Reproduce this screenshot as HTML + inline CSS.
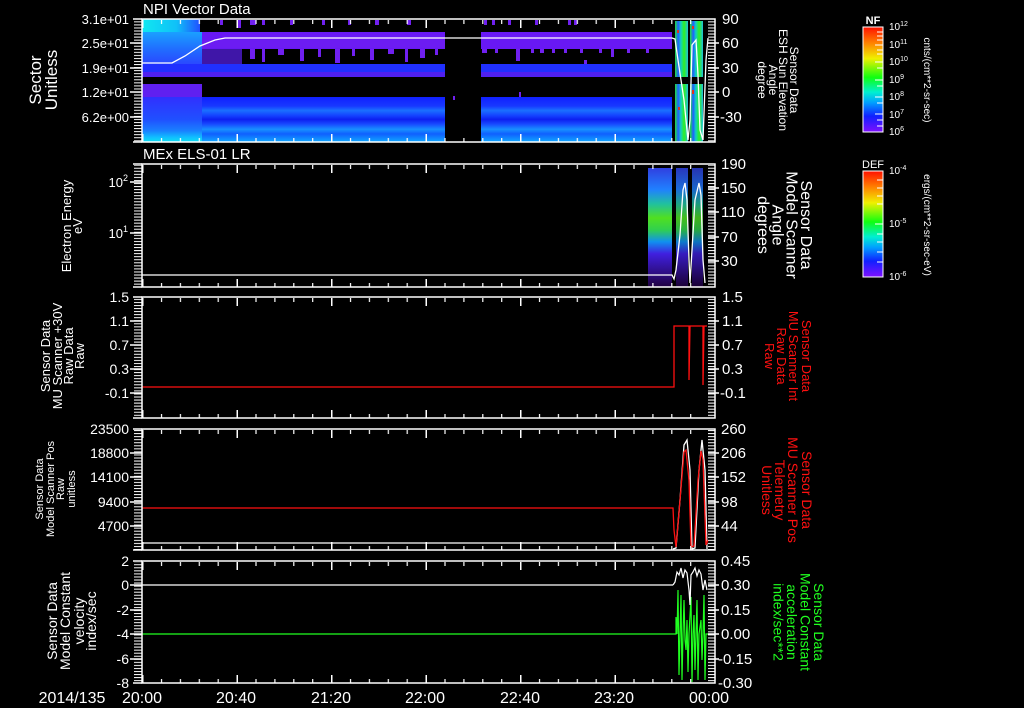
<!DOCTYPE html>
<html><head><meta charset="utf-8"><style>
html,body{margin:0;padding:0;background:#000;}
svg{display:block}
text{font-family:"Liberation Sans",sans-serif;fill:#fff}
</style></head><body>
<svg width="1024" height="708" viewBox="0 0 1024 708" xmlns="http://www.w3.org/2000/svg">
<defs>
<pattern id="tt" x="142" y="0" width="18.9" height="4" patternUnits="userSpaceOnUse"><rect x="0" y="0" width="1.2" height="4" fill="#fff"/></pattern>
<pattern id="tm" x="142" y="0" width="94.5" height="9" patternUnits="userSpaceOnUse"><rect x="0" y="0" width="1.5" height="9" fill="#fff"/></pattern>
<pattern id="yl" x="0" y="0" width="10" height="3.05" patternUnits="userSpaceOnUse"><rect x="0" y="0" width="10" height="1" fill="#fff"/></pattern>
<linearGradient id="rb" x1="0" y1="0" x2="0" y2="1">
<stop offset="0" stop-color="#ff1000"/><stop offset="0.15" stop-color="#ff8000"/><stop offset="0.3" stop-color="#f0f000"/><stop offset="0.48" stop-color="#10ff10"/><stop offset="0.62" stop-color="#00f0d0"/><stop offset="0.72" stop-color="#00a0ff"/><stop offset="0.85" stop-color="#1020ff"/><stop offset="1" stop-color="#8010ff"/></linearGradient>
<linearGradient id="lowb" x1="0" y1="0" x2="0" y2="1">
<stop offset="0" stop-color="#1020ff"/><stop offset="0.2" stop-color="#1838ff"/><stop offset="0.3" stop-color="#1a70ff"/><stop offset="0.42" stop-color="#1440ff"/><stop offset="0.5" stop-color="#0c20f0"/><stop offset="0.6" stop-color="#1848ff"/><stop offset="0.72" stop-color="#1890ff"/><stop offset="0.82" stop-color="#1060ff"/><stop offset="1" stop-color="#10a8ff"/></linearGradient>
<linearGradient id="lowl" x1="0" y1="0" x2="0" y2="1">
<stop offset="0" stop-color="#3030ff"/><stop offset="0.5" stop-color="#2050ff"/><stop offset="0.75" stop-color="#1a80ff"/><stop offset="0.9" stop-color="#10c0ff"/><stop offset="1" stop-color="#10e0f0"/></linearGradient>
<linearGradient id="topl" x1="0" y1="0" x2="1" y2="0">
<stop offset="0" stop-color="#10e8f0"/><stop offset="0.6" stop-color="#10c0f8"/><stop offset="1" stop-color="#2050ff"/></linearGradient>
<linearGradient id="midl" x1="0" y1="0" x2="0" y2="1">
<stop offset="0" stop-color="#1aa0ff"/><stop offset="0.5" stop-color="#2070ff"/><stop offset="1" stop-color="#2a48ff"/></linearGradient>
<linearGradient id="strip" x1="0" y1="0" x2="1" y2="0">
<stop offset="0" stop-color="#20e040"/><stop offset="0.25" stop-color="#2060ff"/><stop offset="0.45" stop-color="#10d0c0"/><stop offset="0.7" stop-color="#30f020"/><stop offset="1" stop-color="#20c0e0"/></linearGradient>
<linearGradient id="els" x1="0" y1="0" x2="0" y2="1">
<stop offset="0" stop-color="#3040e0"/><stop offset="0.18" stop-color="#2080ff"/><stop offset="0.3" stop-color="#20c0a0"/><stop offset="0.42" stop-color="#50e020"/><stop offset="0.52" stop-color="#30d050"/><stop offset="0.62" stop-color="#1090f0"/><stop offset="0.72" stop-color="#4020e0"/><stop offset="1" stop-color="#200040"/></linearGradient>
</defs>

<!-- ===== Panel 1 spectrogram ===== -->
<g>
<rect x="142" y="19" width="58" height="13" fill="url(#topl)"/>
<rect x="142" y="32" width="60" height="32" fill="url(#midl)"/>
<rect x="202" y="32" width="243" height="17" fill="#6818f4"/>
<rect x="481" y="32" width="191" height="17" fill="#6818f4"/>
<rect x="202" y="40" width="243" height="8" fill="#7020f0" opacity="0.6"/>
<rect x="202" y="49" width="40" height="15" fill="#5a20f0" opacity="0.7"/>
<rect x="142" y="64" width="303" height="13" fill="#2030ff"/>
<rect x="481" y="64" width="191" height="13" fill="#2030ff"/>
<rect x="142" y="72" width="303" height="5" fill="#5020f0"/>
<rect x="481" y="72" width="191" height="5" fill="#5020f0"/>
<rect x="142" y="84" width="60" height="13" fill="#6020f0"/>
<rect x="142" y="97" width="303" height="45" fill="url(#lowb)"/>
<rect x="481" y="97" width="191" height="45" fill="url(#lowb)"/>
<rect x="142" y="97" width="60" height="45" fill="url(#lowl)"/>
<g fill="#7020f0">
<rect x="220" y="20" width="3" height="5"/><rect x="238" y="20" width="3" height="8"/><rect x="250" y="20" width="6" height="5"/><rect x="262" y="20" width="3" height="5"/><rect x="290" y="20" width="3" height="5"/><rect x="322" y="20" width="3" height="5"/><rect x="348" y="20" width="3" height="5"/><rect x="375" y="20" width="4" height="5"/><rect x="407" y="20" width="4" height="5"/><rect x="484" y="20" width="3" height="5"/><rect x="492" y="20" width="3" height="5"/><rect x="508" y="20" width="3" height="5"/><rect x="535" y="20" width="3" height="5"/><rect x="568" y="20" width="3" height="5"/><rect x="574" y="20" width="3" height="5"/>
<rect x="250" y="49" width="5" height="10"/><rect x="262" y="49" width="3" height="13"/><rect x="278" y="49" width="6" height="6"/><rect x="300" y="49" width="4" height="12"/><rect x="318" y="49" width="3" height="8"/><rect x="335" y="49" width="5" height="14"/><rect x="352" y="49" width="3" height="7"/><rect x="370" y="49" width="4" height="11"/><rect x="388" y="49" width="6" height="5"/><rect x="405" y="49" width="3" height="13"/><rect x="420" y="49" width="5" height="9"/><rect x="435" y="49" width="3" height="6"/>
<rect x="482" y="49" width="5" height="4"/><rect x="495" y="49" width="3" height="4"/><rect x="516" y="49" width="4" height="12"/><rect x="531" y="49" width="3" height="4"/><rect x="540" y="49" width="4" height="4"/><rect x="552" y="49" width="3" height="4"/><rect x="564" y="49" width="3" height="4"/><rect x="580" y="49" width="3" height="4"/><rect x="584" y="60" width="3" height="4"/><rect x="599" y="49" width="3" height="4"/><rect x="611" y="49" width="3" height="8"/><rect x="627" y="49" width="3" height="4"/><rect x="646" y="49" width="3" height="4"/>
<rect x="519" y="92" width="2" height="5"/><rect x="453" y="96" width="2" height="4"/>
</g>
<rect x="675" y="21" width="13" height="56" fill="url(#strip)"/>
<rect x="690" y="21" width="13" height="56" fill="url(#strip)"/>
<rect x="675" y="84" width="13" height="58" fill="url(#strip)"/>
<rect x="690" y="84" width="13" height="58" fill="url(#strip)"/>
<g fill="#e03020"><rect x="677" y="30" width="2" height="3"/><rect x="692" y="26" width="2" height="3"/><rect x="692" y="90" width="2" height="4"/><rect x="678" y="107" width="2" height="3"/></g>
<polyline points="142,63 172,63 185,56 200,46 215,40 225,38 672,38 675,39 678,60 681,80 684,100 688,140 690,120 692,45 696,40 698,75 700,130 703,140 706,60 708,38" fill="none" stroke="#fff" stroke-width="1.3"/>
</g>

<!-- ===== Panel 2 ===== -->
<rect x="648" y="168" width="24" height="119" fill="url(#els)"/>
<rect x="676" y="168" width="12" height="119" fill="url(#els)" opacity="0.85"/>
<rect x="692" y="168" width="11" height="119" fill="url(#els)" opacity="0.8"/>
<polyline points="142,275 672,275 674,279 676,270 680,235 683,190 685,183 687,200 689,260 690,283 692,250 695,200 699,183 701,195 703,260 705,283" fill="none" stroke="#fff" stroke-width="1.3"/>

<!-- ===== Panel 3 ===== -->
<polyline points="142,387 674,387 674,326 689,326 689,380 690,326 703,326 703,385 704,326 707,326" fill="none" stroke="#ff1010" stroke-width="1.3"/>

<!-- ===== Panel 4 ===== -->
<line x1="142" y1="543" x2="673" y2="543" stroke="#fff" stroke-width="1.2"/>
<polyline points="673,549 676,548 680,500 684,445 687,440 690,470 692,549 695,548 699,470 702,440 705,470 707,549" fill="none" stroke="#fff" stroke-width="1.3"/>
<polyline points="142,508 673,508 674,530 676,547 680,500 684,452 686,450 689,480 691,547 694,546 698,480 701,451 703,460 706,545 708,540" fill="none" stroke="#ff1010" stroke-width="1.3"/>

<!-- ===== Panel 5 ===== -->
<line x1="142" y1="585" x2="673" y2="585" stroke="#fff" stroke-width="1.2"/>
<line x1="142" y1="634" x2="673" y2="634" stroke="#20ff20" stroke-width="1.2"/>
<polyline points="673,634 676,634 676,617 677,634 678,590 679,675 680,634 681,595 682,680 683,634 684,600 685,640 686,650 687,620 688,672 689,634 691,597 692,682 693,634 694,615 695,670 696,634 697,600 698,680 699,634 701,620 702,660 703,634 704,595 705,680 706,634 708,634" fill="none" stroke="#20ff20" stroke-width="1.2"/>
<polyline points="673,585 675,582 677,572 679,575 681,568 683,578 685,570 687,573 689,590 690,605 691,575 693,572 695,568 697,576 699,570 701,574 703,590 705,580 707,590" fill="none" stroke="#fff" stroke-width="1.2"/>

<!-- ===== Frames & ticks ===== -->
<g fill="none" stroke="#fff" stroke-width="1.5">
<rect x="142" y="19" width="573" height="123"/>
<rect x="142" y="164" width="573" height="123"/>
<rect x="142" y="297" width="573" height="121"/>
<rect x="142" y="429" width="573" height="121"/>
<rect x="142" y="561" width="573" height="122"/>
<line x1="133" y1="19" x2="142" y2="19"/><line x1="133" y1="142" x2="142" y2="142"/>
<line x1="133" y1="164" x2="142" y2="164"/><line x1="133" y1="287" x2="142" y2="287"/>
<line x1="133" y1="297" x2="142" y2="297"/><line x1="133" y1="418" x2="142" y2="418"/>
<line x1="133" y1="429" x2="142" y2="429"/><line x1="133" y1="550" x2="142" y2="550"/>
<line x1="133" y1="561" x2="142" y2="561"/><line x1="133" y1="683" x2="142" y2="683"/>
</g>
<g fill="url(#tt)">
<rect x="142" y="20" width="567" height="4"/><rect x="142" y="138" width="567" height="4"/>
<rect x="142" y="165" width="567" height="4"/><rect x="142" y="283" width="567" height="4"/>
<rect x="142" y="298" width="567" height="4"/><rect x="142" y="414" width="567" height="4"/>
<rect x="142" y="430" width="567" height="4"/><rect x="142" y="546" width="567" height="4"/>
<rect x="142" y="562" width="567" height="4"/><rect x="142" y="679" width="567" height="4"/>
</g>
<g fill="url(#tm)">
<rect x="142" y="20" width="567" height="8"/><rect x="142" y="134" width="567" height="8"/>
<rect x="142" y="165" width="567" height="8"/><rect x="142" y="279" width="567" height="8"/>
<rect x="142" y="298" width="567" height="8"/><rect x="142" y="410" width="567" height="8"/>
<rect x="142" y="430" width="567" height="8"/><rect x="142" y="542" width="567" height="8"/>
<rect x="142" y="562" width="567" height="8"/><rect x="142" y="675" width="567" height="8"/>
</g>
<g fill="url(#yl)">
<rect x="134" y="20" width="8" height="122"/><rect x="708" y="20" width="7" height="122"/>
<rect x="134" y="165" width="8" height="122"/><rect x="708" y="165" width="7" height="122"/>
<rect x="134" y="298" width="8" height="120"/><rect x="708" y="298" width="7" height="120"/>
<rect x="134" y="430" width="8" height="120"/><rect x="708" y="430" width="7" height="120"/>
<rect x="134" y="562" width="8" height="121"/><rect x="708" y="562" width="7" height="121"/>
</g>
<g stroke="#fff" stroke-width="1.5">
<line x1="130" y1="43" x2="142" y2="43"/><line x1="130" y1="68" x2="142" y2="68"/><line x1="130" y1="92" x2="142" y2="92"/><line x1="130" y1="117" x2="142" y2="117"/>
<line x1="130" y1="182" x2="142" y2="182"/><line x1="130" y1="233" x2="142" y2="233"/>
<line x1="130" y1="321" x2="142" y2="321"/><line x1="130" y1="345" x2="142" y2="345"/><line x1="130" y1="369" x2="142" y2="369"/><line x1="130" y1="393" x2="142" y2="393"/>
<line x1="130" y1="453" x2="142" y2="453"/><line x1="130" y1="477" x2="142" y2="477"/><line x1="130" y1="502" x2="142" y2="502"/><line x1="130" y1="526" x2="142" y2="526"/>
<line x1="130" y1="585" x2="142" y2="585"/><line x1="130" y1="610" x2="142" y2="610"/><line x1="130" y1="634" x2="142" y2="634"/><line x1="130" y1="659" x2="142" y2="659"/>
<line x1="708" y1="43" x2="719" y2="43"/><line x1="708" y1="68" x2="719" y2="68"/><line x1="708" y1="92" x2="719" y2="92"/><line x1="708" y1="117" x2="719" y2="117"/>
<line x1="708" y1="188" x2="719" y2="188"/><line x1="708" y1="212" x2="719" y2="212"/><line x1="708" y1="237" x2="719" y2="237"/><line x1="708" y1="261" x2="719" y2="261"/>
<line x1="708" y1="321" x2="719" y2="321"/><line x1="708" y1="345" x2="719" y2="345"/><line x1="708" y1="369" x2="719" y2="369"/><line x1="708" y1="393" x2="719" y2="393"/>
<line x1="708" y1="453" x2="719" y2="453"/><line x1="708" y1="477" x2="719" y2="477"/><line x1="708" y1="502" x2="719" y2="502"/><line x1="708" y1="526" x2="719" y2="526"/>
<line x1="708" y1="585" x2="719" y2="585"/><line x1="708" y1="610" x2="719" y2="610"/><line x1="708" y1="634" x2="719" y2="634"/><line x1="708" y1="659" x2="719" y2="659"/>
</g>

<text x="143" y="14" font-size="15">NPI Vector Data</text>
<text x="143" y="159" font-size="15">MEx ELS-01 LR</text>

<g font-size="13" text-anchor="end">
<text x="129" y="24">3.1e+01</text><text x="129" y="48">2.5e+01</text><text x="129" y="73">1.9e+01</text><text x="129" y="97">1.2e+01</text><text x="129" y="122">6.2e+00</text>
<text x="128" y="187">10<tspan font-size="9" dy="-6">2</tspan></text>
<text x="128" y="238">10<tspan font-size="9" dy="-6">1</tspan></text>
</g>
<g font-size="14" text-anchor="end">
<text x="129" y="302">1.5</text><text x="129" y="326">1.1</text><text x="129" y="350">0.7</text><text x="129" y="374">0.3</text><text x="129" y="398">-0.1</text>
<text x="129" y="434">23500</text><text x="129" y="458">18800</text><text x="129" y="482">14100</text><text x="129" y="507">9400</text><text x="129" y="531">4700</text>
<text x="129" y="566">2</text><text x="129" y="590">0</text><text x="129" y="615">-2</text><text x="129" y="639">-4</text><text x="129" y="664">-6</text><text x="129" y="688">-8</text>
</g>
<g font-size="15">
<text x="722" y="24">90</text><text x="722" y="48">60</text><text x="722" y="73">30</text><text x="722" y="97">0</text><text x="720" y="122">-30</text>
<text x="721" y="169">190</text><text x="721" y="193">150</text><text x="721" y="217">110</text><text x="721" y="242">70</text><text x="721" y="266">30</text>
<text x="722" y="302">1.5</text><text x="722" y="326">1.1</text><text x="722" y="350">0.7</text><text x="722" y="374">0.3</text><text x="720" y="398">-0.1</text>
<text x="721" y="434">260</text><text x="721" y="458">206</text><text x="721" y="482">152</text><text x="721" y="507">98</text><text x="721" y="531">44</text>
<text x="721" y="566">0.45</text><text x="721" y="590">0.30</text><text x="721" y="615">0.15</text><text x="721" y="639">0.00</text><text x="718" y="664">-0.15</text><text x="718" y="688">-0.30</text>
</g>

<g font-size="16" text-anchor="middle">
<text x="72" y="703">2014/135</text>
<text x="142" y="703">20:00</text><text x="236" y="703">20:40</text><text x="331" y="703">21:20</text><text x="425" y="703">22:00</text><text x="520" y="703">22:40</text><text x="614" y="703">23:20</text><text x="709" y="703">00:00</text>
</g>

<text transform="translate(41,80) rotate(-90)" font-size="17" text-anchor="middle"><tspan x="0" dy="0">Sector</tspan><tspan x="0" dy="16">Unitless</tspan></text>
<text transform="translate(71,226) rotate(-90)" font-size="13" text-anchor="middle"><tspan x="0" dy="0">Electron Energy</tspan><tspan x="0" dy="11">eV</tspan></text>
<text transform="translate(50,356) rotate(-90)" font-size="13" text-anchor="middle"><tspan x="0" dy="0">Sensor Data</tspan><tspan x="0" dy="12">MU Scanner +30V</tspan><tspan x="0" dy="11">Raw Data</tspan><tspan x="0" dy="11">Raw</tspan></text>
<text transform="translate(43,489) rotate(-90)" font-size="11" text-anchor="middle"><tspan x="0" dy="0">Sensor Data</tspan><tspan x="0" dy="11">Model Scanner Pos</tspan><tspan x="0" dy="10">Raw</tspan><tspan x="0" dy="11">unitless</tspan></text>
<text transform="translate(57,621) rotate(-90)" font-size="14" text-anchor="middle"><tspan x="0" dy="0">Sensor Data</tspan><tspan x="0" dy="13">Model Constant</tspan><tspan x="0" dy="14">velocity</tspan><tspan x="0" dy="12">index/sec</tspan></text>

<text transform="translate(790,80) rotate(90)" font-size="12" text-anchor="middle"><tspan x="0" dy="0">Sensor Data</tspan><tspan x="0" dy="11">ESH Sun Elevation</tspan><tspan x="0" dy="10">Angle</tspan><tspan x="0" dy="11">degree</tspan></text>
<text transform="translate(801,225) rotate(90)" font-size="16" text-anchor="middle"><tspan x="0" dy="0">Sensor Data</tspan><tspan x="0" dy="14.5">Model Scanner</tspan><tspan x="0" dy="14">Angle</tspan><tspan x="0" dy="14.5">degrees</tspan></text>
<text transform="translate(802,356) rotate(90)" font-size="13" text-anchor="middle" style="fill:#ff1010"><tspan x="0" dy="0">Sensor Data</tspan><tspan x="0" dy="13">MU Scanner Int</tspan><tspan x="0" dy="12">Raw Data</tspan><tspan x="0" dy="12">Raw</tspan></text>
<text transform="translate(802,490) rotate(90)" font-size="14" text-anchor="middle" style="fill:#ff1010"><tspan x="0" dy="0">Sensor Data</tspan><tspan x="0" dy="14">MU Scanner Pos</tspan><tspan x="0" dy="13">Telemetry</tspan><tspan x="0" dy="13">Unitless</tspan></text>
<text transform="translate(814,622) rotate(90)" font-size="14" text-anchor="middle" style="fill:#20ff20"><tspan x="0" dy="0">Sensor Data</tspan><tspan x="0" dy="13.5">Model Constant</tspan><tspan x="0" dy="13.5">acceleration</tspan><tspan x="0" dy="13.5">index/sec**2</tspan></text>

<rect x="863" y="27" width="20" height="105" fill="url(#rb)" stroke="#fff" stroke-width="1"/>
<rect x="863" y="171" width="20" height="106" fill="url(#rb)" stroke="#fff" stroke-width="1"/>
<g stroke="#fff" stroke-width="1">
<line x1="877" y1="32" x2="883" y2="32"/><line x1="877" y1="36" x2="883" y2="36"/><line x1="877" y1="40" x2="883" y2="40"/><line x1="875" y1="45" x2="883" y2="45"/><line x1="877" y1="50" x2="883" y2="50"/><line x1="877" y1="54" x2="883" y2="54"/><line x1="875" y1="62" x2="883" y2="62"/><line x1="877" y1="68" x2="883" y2="68"/><line x1="875" y1="80" x2="883" y2="80"/><line x1="877" y1="86" x2="883" y2="86"/><line x1="875" y1="97" x2="883" y2="97"/><line x1="877" y1="103" x2="883" y2="103"/><line x1="875" y1="114" x2="883" y2="114"/><line x1="877" y1="120" x2="883" y2="120"/><line x1="877" y1="126" x2="883" y2="126"/>
<line x1="877" y1="180" x2="883" y2="180"/><line x1="877" y1="188" x2="883" y2="188"/><line x1="877" y1="196" x2="883" y2="196"/><line x1="877" y1="204" x2="883" y2="204"/><line x1="875" y1="224" x2="883" y2="224"/><line x1="877" y1="234" x2="883" y2="234"/><line x1="877" y1="242" x2="883" y2="242"/><line x1="877" y1="252" x2="883" y2="252"/><line x1="877" y1="262" x2="883" y2="262"/>
</g>
<text x="873" y="24" font-size="11" text-anchor="middle" font-weight="bold">NF</text>
<text x="873" y="168" font-size="11" text-anchor="middle">DEF</text>
<g font-size="10">
<text x="889" y="30">10<tspan font-size="7" dy="-4">12</tspan></text>
<text x="889" y="48">10<tspan font-size="7" dy="-4">11</tspan></text>
<text x="889" y="65">10<tspan font-size="7" dy="-4">10</tspan></text>
<text x="889" y="83">10<tspan font-size="7" dy="-4">9</tspan></text>
<text x="889" y="100">10<tspan font-size="7" dy="-4">8</tspan></text>
<text x="889" y="118">10<tspan font-size="7" dy="-4">7</tspan></text>
<text x="889" y="135">10<tspan font-size="7" dy="-4">6</tspan></text>
<text x="889" y="174">10<tspan font-size="7" dy="-4">-4</tspan></text>
<text x="889" y="227">10<tspan font-size="7" dy="-4">-5</tspan></text>
<text x="889" y="280">10<tspan font-size="7" dy="-4">-6</tspan></text>
</g>
<text transform="translate(924,80) rotate(90)" font-size="10" text-anchor="middle">cnts/(cm**2-sr-sec)</text>
<text transform="translate(924,225) rotate(90)" font-size="10" text-anchor="middle">ergs/(cm**2-sr-sec-eV)</text>
</svg>
</body></html>
